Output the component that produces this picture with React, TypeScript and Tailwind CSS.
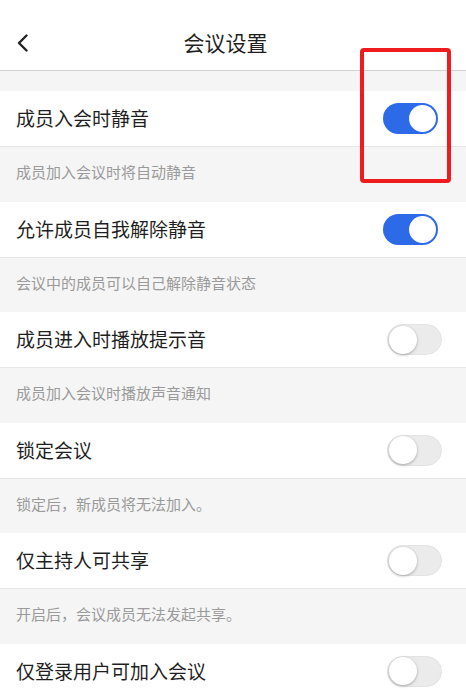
import React from 'react';

interface SettingItem {
  title: string;
  desc?: string;
  on: boolean;
}

const items: SettingItem[] = [
  { title: '成员入会时静音', desc: '成员加入会议时将自动静音', on: true },
  { title: '允许成员自我解除静音', desc: '会议中的成员可以自己解除静音状态', on: true },
  { title: '成员进入时播放提示音', desc: '成员加入会议时播放声音通知', on: false },
  { title: '锁定会议', desc: '锁定后，新成员将无法加入。', on: false },
  { title: '仅主持人可共享', desc: '开启后，会议成员无法发起共享。', on: false },
  { title: '仅登录用户可加入会议', on: false },
];

const Toggle: React.FC<{ on: boolean }> = ({ on }) =>
  on ? (
    <div className="w-[55px] h-[31px] rounded-full bg-[#2d6ae8] flex items-center justify-end pr-[2px]">
      <div className="w-[27px] h-[27px] rounded-full bg-white" />
    </div>
  ) : (
    <div className="w-[55px] h-[31px] mr-[-4px] rounded-full bg-[#ebebeb] border border-[#e3e3e3] flex items-center pl-[1px]">
      <div className="w-[28px] h-[28px] rounded-full bg-white shadow-[0_1px_3px_rgba(0,0,0,0.3)]" />
    </div>
  );

export default function App() {
  return (
    <div
      className="relative w-[466px] h-[699px] overflow-hidden bg-[#f5f5f5]"
      style={{ fontFamily: '"Noto Sans CJK SC", "Noto Sans", sans-serif' }}
    >
      <div className="h-[71px] bg-white border-b border-[#d2d2d2] flex items-center pl-[16px] relative">
        <svg width="14" height="18" viewBox="0 0 14 18" className="mt-[15px]">
          <path d="M10.5 1.5 L3 9 L10.5 16.5" fill="none" stroke="#222" strokeWidth="2.4" strokeLinecap="round" strokeLinejoin="round" />
        </svg>
        <div className="absolute inset-x-0 top-0 h-full flex items-center justify-center pr-[15px] pointer-events-none">
          <span className="text-[21px] text-[#1f1f1f] mt-[15px]">会议设置</span>
        </div>
      </div>
      <div className="h-[20px]" />
      {items.map((it) => (
        <div key={it.title}>
          <div className="h-[56px] bg-white border-b border-[#e6e6e6] flex items-center justify-between pl-4 pr-[28px]">
            <span className="text-[19px] text-[#1f1f1f]">{it.title}</span>
            <Toggle on={it.on} />
          </div>
          {it.desc && (
            <div className="h-[54.5px] flex items-center pl-4 pb-[4px]">
              <span className="text-[15px] text-[#9a9a9a]">{it.desc}</span>
            </div>
          )}
        </div>
      ))}
      <div className="absolute left-[360px] top-[48px] w-[91px] h-[135px] border-[4px] border-[#ee1c1c] rounded-[4px]" />
    </div>
  );
}
